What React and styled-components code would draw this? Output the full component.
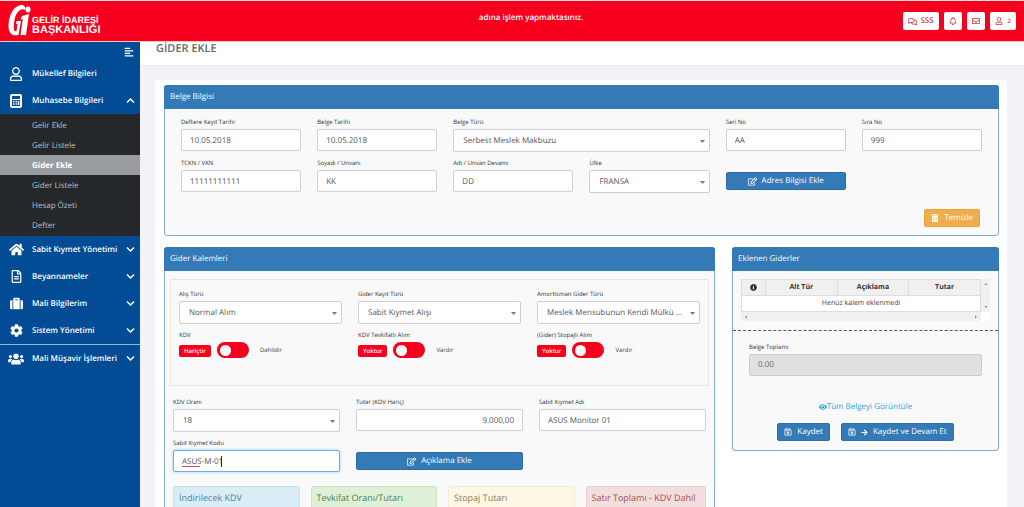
/* eslint-disable react/prop-types */
import { useState } from "react";
import styled, { createGlobalStyle, css } from "styled-components";
import {
  FaAlignLeft,
  FaArrowRight,
  FaCog,
  FaEye,
  FaHome,
  FaInfoCircle,
  FaRegBell,
  FaRegComments,
  FaRegEdit,
  FaRegEnvelope,
  FaRegFileAlt,
  FaRegSave,
  FaRegUser,
  FaSuitcase,
  FaTrashAlt,
  FaUsers,
} from "react-icons/fa";

const GlobalStyle = createGlobalStyle`
  *, *::before, *::after {
    box-sizing: border-box;
  }

  body {
    margin: 0;
    background: #f1f3f8;
    color: #444;
    font-family: "Open Sans", "Noto Sans", sans-serif;
    font-size: 8px;
    line-height: 12px;
    text-rendering: geometricPrecision;
  }

  button, input, select {
    font-family: inherit;
    font-size: inherit;
    line-height: inherit;
    text-rendering: inherit;
  }
`;

const Pagina = styled.div`
  display: flex;
  flex-direction: column;
  height: 100vh;
  overflow: hidden;
`;

const Cabecera = styled.header`
  display: flex;
  flex: none;
  align-items: center;
  justify-content: space-between;
  height: 42px;
  padding: 0 8px;
  background: #f6001e;
  border-top: 1px solid #f9dcdc;
  border-bottom: 1px solid #f9c4c8;
`;

const Marca = styled.a`
  display: flex;
  flex: 1;
  align-items: center;
  gap: 1px;
  color: white;
  text-decoration: none;
`;

const MarcaTexto = styled.span`
  display: flex;
  flex-direction: column;
  padding-top: 8px;
  font-family: "Liberation Sans", Arial, sans-serif;
  font-size: 9px;
  font-weight: bold;
  line-height: 10px;
`;

const MarcaTextoGrande = styled.span`
  font-size: 11px;
`;

const Aviso = styled.p`
  margin: 0;
  padding: 0 0 7px 38px;
  color: white;
  font-size: 8px;
  font-weight: 600;
`;

const Acciones = styled.div`
  display: flex;
  flex: 1;
  justify-content: flex-end;
  gap: 5px;
`;

const BotonCabecera = styled.button`
  display: flex;
  align-items: center;
  justify-content: center;
  gap: 3px;
  height: 18px;
  min-width: 18px;
  padding: 0 5px;
  border: 0;
  border-radius: 2px;
  background: white;
  color: #d9333f;
  font-weight: 600;

  small {
    padding-left: 2px;
    font-size: 6px;
  }
`;

const Cuerpo = styled.div`
  display: flex;
  flex: 1;
  min-height: 0;
`;

const Lateral = styled.nav`
  flex: none;
  width: 140px;
  background: #014c94;
`;

const FilaPlegar = styled.div`
  display: flex;
  justify-content: flex-end;
  height: 18px;
  padding: 5px 6px 0 0;
`;

const BotonPlegar = styled.button`
  display: flex;
  height: 10px;
  padding: 0;
  border: 0;
  background: none;
  color: white;
`;

const MenuItem = styled.button`
  display: grid;
  grid-template-columns: 16px minmax(0, 1fr) 9px;
  align-items: center;
  column-gap: 8px;
  width: 100%;
  height: 27px;
  padding: 0 5px 0 8px;
  border: 0;
  background: none;
  color: white;
  font-weight: 600;
  text-align: left;
  white-space: nowrap;

  > svg:first-child {
    justify-self: center;
  }
`;

const Separador = styled.hr`
  margin: 0;
  border: 0;
  border-top: 1px solid #8fb4d6;
`;

const SubMenu = styled.ul`
  margin: 0;
  padding: 1px 0;
  background: #25282b;
  list-style: none;
`;

const SubEnlace = styled.a`
  display: block;
  padding: 5px 0 3px 32px;
  background: ${({ $activo }) => ($activo ? "#9a9da0" : "transparent")};
  color: ${({ $activo }) => ($activo ? "white" : "#b4c1c9")};
  font-weight: ${({ $activo }) => ($activo ? "bold" : "normal")};
  text-decoration: none;
`;

const Contenido = styled.main`
  flex: 1;
  min-width: 0;
  overflow: hidden;
`;

const Titulo = styled.h1`
  height: 24px;
  margin: 0;
  padding: 0 16px;
  background: white;
  border-bottom: 1px solid #e9ecf1;
  color: #666;
  font-size: 11px;
  font-weight: 600;
  line-height: 13px;
`;

const Hoja = styled.div`
  display: flex;
  flex-direction: column;
  gap: 11px;
  margin: 14px 17px 0 15px;
  padding: 5px 8px 24px 9px;
  background: white;
`;

const Columnas = styled.div`
  display: grid;
  grid-template-columns: minmax(0, 551fr) minmax(0, 267fr);
  align-items: start;
  gap: 17px;
`;

const PanelCaja = styled.section`
  border: 1px solid #85abcd;
  border-radius: 3px;
  background: #f9f9f9;
`;

const PanelTitulo = styled.h2`
  margin: -1px -1px 0;
  padding: 6px;
  border-radius: 3px 3px 0 0;
  background: #337ab7;
  color: white;
  font-size: 8px;
  font-weight: normal;
  line-height: 12px;
`;

const Rejilla = styled.div`
  display: grid;
  grid-template-columns: repeat(${({ $columnas }) => $columnas}, minmax(0, 1fr));
  align-items: start;
  gap: 5px 16px;
  padding: ${({ $relleno }) => $relleno || "0"};
`;

const CampoCaja = styled.div`
  display: flex;
  flex-direction: column;
  gap: 1px;
  min-height: 36px;
  grid-column: span ${({ $ancho }) => $ancho || 1};
`;

const Etiqueta = styled.label`
  height: 12px;
  color: #333;
  font-size: 6px;
  white-space: nowrap;
`;

const controlBase = css`
  width: 100%;
  border: 1px solid #ccd0d4;
  border-radius: 2px;
  background: white;
  color: #555;
  font-size: 8px;
`;

const Entrada = styled.input`
  ${controlBase}
  height: 22px;
  padding: 0 8px;
  outline: 0;
  text-align: ${({ $derecha }) => ($derecha ? "right" : "left")};

  &:disabled {
    padding-bottom: 2px;
    border-color: #ccc;
    background: #e0e0e0;
    color: #666;
  }

  ${({ $enfocado }) =>
    $enfocado &&
    css`
      border-color: #66afe9;
      box-shadow: 0 0 3px rgba(102, 175, 233, 0.6);
    `}
`;

const Superpuesto = styled.div`
  position: relative;
  display: flex;
`;

const Seleccion = styled.select`
  ${controlBase}
  appearance: none;
  height: 23px;
  padding: 0 12px 0 9px;
  text-overflow: ellipsis;
`;

const Flecha = styled.svg`
  position: absolute;
  top: 11px;
  right: 5px;
  pointer-events: none;
`;

const MarcaOrtografia = styled.span`
  position: absolute;
  bottom: 5px;
  left: 9px;
  width: 18px;
  border-bottom: 1px solid #e0443e;
`;

const Cursor = styled.span`
  position: absolute;
  top: 6px;
  left: 48px;
  height: 11px;
  border-left: 1px solid #333;
`;

const Boton = styled.button`
  display: flex;
  align-items: center;
  justify-content: center;
  gap: 5px;
  height: 18px;
  padding: 0 6px;
  border: 1px solid ${({ $aviso }) => ($aviso ? "#eea236" : "#2e6da4")};
  border-radius: 2px;
  background: ${({ $aviso }) => ($aviso ? "#f0ad4e" : "#337ab7")};
  color: white;
  white-space: nowrap;
`;

const CeldaBoton = styled.div`
  display: grid;
  padding-top: 15px;
`;

const PieDerecha = styled.div`
  display: flex;
  justify-content: flex-end;
  padding: 16px 18px 8px;
`;

const Grupo = styled.div`
  min-height: 107px;
  margin: 8px 5px 0;
  padding: 8px;
  border: 1px solid #e9e6dd;
`;

const FilaInterruptor = styled.div`
  display: flex;
  align-items: center;
  gap: 6px;
  height: 16px;
  font-size: 6px;
`;

const Insignia = styled.span`
  margin-top: 2px;
  padding: 0 5px;
  border-radius: 2px;
  background: #f6001e;
  color: white;
  font-size: 6px;
  font-weight: 600;
`;

const Interruptor = styled.input`
  appearance: none;
  display: flex;
  align-items: center;
  width: 32px;
  height: 16px;
  margin: 0 5px 0 0;
  padding: 0 3px;
  border-radius: 8px;
  background: #f6001e;

  &::before {
    content: "";
    width: 11px;
    height: 11px;
    border-radius: 50%;
    background: white;
  }

  &:checked {
    justify-content: flex-end;
  }
`;

const Resumen = styled.div`
  display: grid;
  grid-template-columns: repeat(3, minmax(0, 21fr)) minmax(0, 20fr);
  gap: 11px;
  padding: 13px 8px 8px;
`;

const tonos = {
  info: ["#d9edf7", "#c3e4ee", "#4a84a5"],
  exito: ["#dff0d8", "#d0e6c2", "#4f8150"],
  alerta: ["#fcf8e3", "#f7ecd0", "#8f7a4e"],
  peligro: ["#f2dede", "#ebccd1", "#ad4f4d"],
};

const Tarjeta = styled.div`
  min-height: 48px;
  padding: 5px;
  border: 1px solid ${({ $tono }) => tonos[$tono][1]};
  border-radius: 2px;
  background: ${({ $tono }) => tonos[$tono][0]};
  color: ${({ $tono }) => tonos[$tono][2]};
  font-size: 9px;
  white-space: nowrap;
`;

const MarcoTabla = styled.div`
  display: grid;
  grid-template-columns: 1fr 9px;
  margin: 8px 8px 9px;
  background: white;
`;

const Tabla = styled.table`
  width: 100%;
  border-collapse: collapse;
  table-layout: fixed;
  font-size: 7px;
  line-height: 15px;

  th, td {
    padding: 0;
    border: 1px solid #ddd;
    text-align: center;
  }

  th {
    background: #f0f0f0;
    color: #333;
  }

  th:first-child {
    width: 24px;
  }

  th svg {
    vertical-align: middle;
  }
`;

const Barra = styled.div`
  display: flex;
  flex-direction: ${({ $vertical }) => ($vertical ? "column" : "row")};
  align-items: center;
  justify-content: space-between;
  min-height: 9px;
  padding: ${({ $vertical }) => ($vertical ? "3px 0" : "0 3px")};
  background: #f0f0f0;
`;

const Totales = styled.div`
  display: flex;
  flex-direction: column;
  gap: 24px;
  padding: 10px 16px 9px;
  border-top: 1px dashed #555;
`;

const Centro = styled.div`
  display: flex;
  flex-direction: column;
  align-items: center;
  gap: 10px;
`;

const EnlaceVer = styled.a`
  display: flex;
  align-items: center;
  color: #29a9df;
  text-decoration: none;
`;

const Botones = styled.div`
  display: flex;
  gap: 11px;
`;

const Logo = () => (
  <svg width="23" height="32" viewBox="0 0 23 32" fill="white" aria-hidden="true">
    <path d="M13 0C6 1 1 9 0.500 20C0.200 28 4 31.500 10.500 30L13 16H8.500L8 19H9.500L8.500 26C6 27 5.500 24 6 19C6.700 11 9 6 13.500 4.500C15 4 16 4.500 17 5C18 2 16.500 0 13 0Z" />
    <path d="M14 11L21 9L18 30H12.500L14.800 14L12.500 14.500Z" />
    <ellipse cx="20" cy="4.500" rx="2.500" ry="3" />
  </svg>
);

const IconoCalculadora = () => (
  <svg width="12" height="14" viewBox="0 0 12 14" fill="none" stroke="white" aria-hidden="true">
    <rect x="1" y="1" width="10" height="12" rx="1" strokeWidth="2" />
    <path d="M1 5.500H11" strokeWidth="1" />
    <path d="M3 7.500H4.500M5.500 7.500H7M3 10H4.500M5.500 10H7" strokeWidth="1.500" />
    <path d="M8.500 7V11" strokeWidth="1.500" />
  </svg>
);

const Galon = ({ arriba }) => (
  <svg width="9" height="9" viewBox="0 0 9 9" fill="none" stroke="white" strokeWidth="1.500" aria-hidden="true">
    <path d={arriba ? "M1 6.500L4.500 3L8 6.500" : "M1 2.500L4.500 6L8 2.500"} />
  </svg>
);

const Triangulo = ({ giro = 0 }) => (
  <svg width="4" height="4" viewBox="0 0 4 4" aria-hidden="true">
    <path d="M0.500 3L2 1L3.500 3Z" fill="#888" transform={`rotate(${giro} 2 2)`} />
  </svg>
);

const Panel = ({ titulo, children }) => (
  <PanelCaja>
    <PanelTitulo>{titulo}</PanelTitulo>
    {children}
  </PanelCaja>
);

const CampoTexto = ({ id, etiqueta, valor, ...resto }) => {
  const [texto, setTexto] = useState(valor);

  return (
    <CampoCaja>
      <Etiqueta htmlFor={id}>{etiqueta}</Etiqueta>
      <Entrada id={id} value={texto} spellCheck={false} onChange={({ target }) => setTexto(target.value)} {...resto} />
    </CampoCaja>
  );
};

const CampoSeleccion = ({ id, etiqueta, valor, ancho }) => (
  <CampoCaja $ancho={ancho}>
    <Etiqueta htmlFor={id}>{etiqueta}</Etiqueta>
    <Superpuesto>
      <Seleccion id={id} defaultValue={valor}>
        <option>{valor}</option>
      </Seleccion>
      <Flecha width="5" height="3" viewBox="0 0 5 3" aria-hidden="true">
        <path d="M0 0H5L2.500 3Z" fill="#777" />
      </Flecha>
    </Superpuesto>
  </CampoCaja>
);

const CampoInterruptor = ({ id, etiqueta, no, si }) => (
  <CampoCaja>
    <Etiqueta htmlFor={id}>{etiqueta}</Etiqueta>
    <FilaInterruptor>
      <Insignia>{no}</Insignia>
      <Interruptor id={id} type="checkbox" role="switch" />
      <span>{si}</span>
    </FilaInterruptor>
  </CampoCaja>
);

const subMenu = ["Gelir Ekle", "Gelir Listele", "Gider Ekle", "Gider Listele", "Hesap Özeti", "Defter"];

const menu = [
  { texto: "Sabit Kıymet Yönetimi", icono: <FaHome size={15} /> },
  { texto: "Beyannameler", icono: <FaRegFileAlt size={13} /> },
  { texto: "Mali Bilgilerim", icono: <FaSuitcase size={13} /> },
  { texto: "Sistem Yönetimi", icono: <FaCog size={13} /> },
];

const MenuLateral = () => (
  <Lateral>
    <FilaPlegar>
      <BotonPlegar aria-label="Menü">
        <FaAlignLeft size={10} />
      </BotonPlegar>
    </FilaPlegar>
    <MenuItem>
      <FaRegUser size={14} />
      Mükellef Bilgileri
    </MenuItem>
    <MenuItem>
      <IconoCalculadora />
      Muhasebe Bilgileri
      <Galon arriba />
    </MenuItem>
    <SubMenu>
      {subMenu.map((texto) => (
        <li key={texto}>
          <SubEnlace href="#" $activo={texto === "Gider Ekle"}>
            {texto}
          </SubEnlace>
        </li>
      ))}
    </SubMenu>
    {menu.map(({ texto, icono }) => (
      <MenuItem key={texto}>
        {icono}
        {texto}
        <Galon />
      </MenuItem>
    ))}
    <Separador />
    <MenuItem>
      <FaUsers size={16} />
      Mali Müşavir İşlemleri
      <Galon />
    </MenuItem>
  </Lateral>
);

const BelgeBilgisi = () => (
  <Panel titulo="Belge Bilgisi">
    <Rejilla $columnas={6} $relleno="7px 16px 0">
      <CampoTexto id="kayitTarihi" etiqueta="Deftere Kayıt Tarihi" valor="10.05.2018" />
      <CampoTexto id="belgeTarihi" etiqueta="Belge Tarihi" valor="10.05.2018" />
      <CampoSeleccion id="belgeTuru" etiqueta="Belge Türü" valor="Serbest Meslek Makbuzu" ancho={2} />
      <CampoTexto id="seriNo" etiqueta="Seri No" valor="AA" />
      <CampoTexto id="siraNo" etiqueta="Sıra No" valor="999" />
      <CampoTexto id="vkn" etiqueta="TCKN / VKN" valor="11111111111" />
      <CampoTexto id="soyadi" etiqueta="Soyadı / Unvanı" valor="KK" />
      <CampoTexto id="adi" etiqueta="Adı / Unvan Devamı" valor="DD" />
      <CampoSeleccion id="ulke" etiqueta="Ülke" valor="FRANSA" />
      <CeldaBoton>
        <Boton>
          <FaRegEdit size={9} />
          Adres Bilgisi Ekle
        </Boton>
      </CeldaBoton>
    </Rejilla>
    <PieDerecha>
      <Boton $aviso>
        <FaTrashAlt size={8} />
        Temizle
      </Boton>
    </PieDerecha>
  </Panel>
);

const GiderKalemleri = () => {
  const [kod, setKod] = useState("ASUS-M-01");

  return (
    <Panel titulo="Gider Kalemleri">
      <Grupo>
        <Rejilla $columnas={3}>
          <CampoSeleccion id="alisTuru" etiqueta="Alış Türü" valor="Normal Alım" />
          <CampoSeleccion id="giderKayitTuru" etiqueta="Gider Kayıt Türü" valor="Sabit Kıymet Alışı" />
          <CampoSeleccion id="amortisman" etiqueta="Amortisman Gider Türü" valor="Meslek Mensubunun Kendi Mülkü ..." />
          <CampoInterruptor id="kdv" etiqueta="KDV" no="Hariçtir" si="Dahildir" />
          <CampoInterruptor id="tevkifat" etiqueta="KDV Tevkifatlı Alım" no="Yoktur" si="Vardır" />
          <CampoInterruptor id="stopaj" etiqueta="(Gider) Stopajlı Alım" no="Yoktur" si="Vardır" />
        </Rejilla>
      </Grupo>
      <Rejilla $columnas={3} $relleno="10px 8px 0">
        <CampoSeleccion id="kdvOrani" etiqueta="KDV Oranı" valor="18" />
        <CampoTexto id="tutar" etiqueta="Tutar (KDV Hariç)" valor="9.000,00" $derecha />
        <CampoTexto id="kiymetAdi" etiqueta="Sabit Kıymet Adı" valor="ASUS Monitor 01" />
        <CampoCaja>
          <Etiqueta htmlFor="kiymetKodu">Sabit Kıymet Kodu</Etiqueta>
          <Superpuesto>
            <Entrada
              id="kiymetKodu"
              value={kod}
              spellCheck={false}
              onChange={({ target }) => setKod(target.value)}
              $enfocado
            />
            <MarcaOrtografia />
            <Cursor />
          </Superpuesto>
        </CampoCaja>
        <CeldaBoton>
          <Boton>
            <FaRegEdit size={9} />
            Açıklama Ekle
          </Boton>
        </CeldaBoton>
      </Rejilla>
      <Resumen>
        <Tarjeta $tono="info">İndirilecek KDV</Tarjeta>
        <Tarjeta $tono="exito">Tevkifat Oranı/Tutarı</Tarjeta>
        <Tarjeta $tono="alerta">Stopaj Tutarı</Tarjeta>
        <Tarjeta $tono="peligro">Satır Toplamı - KDV Dahil</Tarjeta>
      </Resumen>
    </Panel>
  );
};

const EklenenGiderler = () => (
  <Panel titulo="Eklenen Giderler">
    <MarcoTabla>
      <Tabla>
        <thead>
          <tr>
            <th aria-label="Bilgi">
              <FaInfoCircle size={7} />
            </th>
            <th>Alt Tür</th>
            <th>Açıklama</th>
            <th>Tutar</th>
          </tr>
        </thead>
        <tbody>
          <tr>
            <td colSpan={4}>Henüz kalem eklenmedi</td>
          </tr>
        </tbody>
      </Tabla>
      <Barra $vertical>
        <Triangulo />
        <Triangulo giro={180} />
      </Barra>
      <Barra>
        <Triangulo giro={270} />
        <Triangulo giro={90} />
      </Barra>
    </MarcoTabla>
    <Totales>
      <CampoTexto id="toplam" etiqueta="Belge Toplamı" valor="0.00" disabled />
      <Centro>
        <EnlaceVer href="#">
          <FaEye size={8} />
          Tüm Belgeyi Görüntüle
        </EnlaceVer>
        <Botones>
          <Boton>
            <FaRegSave size={8} />
            Kaydet
          </Boton>
          <Boton>
            <FaRegSave size={8} />
            <FaArrowRight size={7} />
            Kaydet ve Devam Et
          </Boton>
        </Botones>
      </Centro>
    </Totales>
  </Panel>
);

const App = () => (
  <>
    <GlobalStyle />
    <Pagina>
      <Cabecera>
        <Marca href="#">
          <Logo />
          <MarcaTexto>
            GELİR İDARESİ
            <MarcaTextoGrande>BAŞKANLIĞI</MarcaTextoGrande>
          </MarcaTexto>
        </Marca>
        <Aviso>adına işlem yapmaktasınız.</Aviso>
        <Acciones>
          <BotonCabecera>
            <FaRegComments size={9} />
            SSS
          </BotonCabecera>
          <BotonCabecera aria-label="Bildirimler">
            <FaRegBell size={8} />
          </BotonCabecera>
          <BotonCabecera aria-label="Mesajlar">
            <FaRegEnvelope size={8} />
          </BotonCabecera>
          <BotonCabecera aria-label="Kullanıcı">
            <FaRegUser size={8} />
            <small>2</small>
          </BotonCabecera>
        </Acciones>
      </Cabecera>
      <Cuerpo>
        <MenuLateral />
        <Contenido>
          <Titulo>GİDER EKLE</Titulo>
          <Hoja>
            <BelgeBilgisi />
            <Columnas>
              <GiderKalemleri />
              <EklenenGiderler />
            </Columnas>
          </Hoja>
        </Contenido>
      </Cuerpo>
    </Pagina>
  </>
);

export default App;
